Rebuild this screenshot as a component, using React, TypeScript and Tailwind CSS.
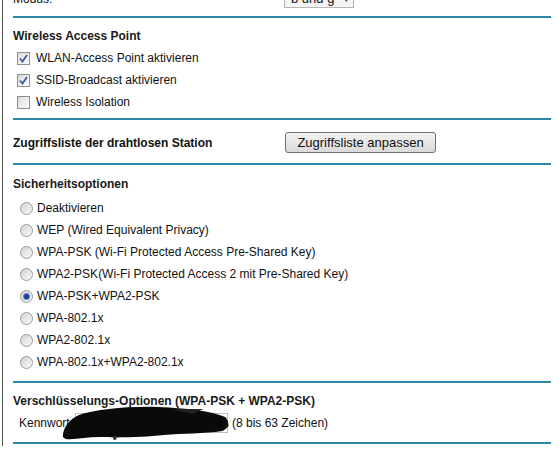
import React from 'react';

const Line = () => <div className="h-[2px] w-[538px] bg-[#2a88a6]" />;

const Check = ({ checked }: { checked?: boolean }) => (
  <span className="flex h-[13px] w-[13px] items-center justify-center border border-[#8e8f8f] bg-gradient-to-br from-[#dcdcdc] to-[#fbfbfb]">
    {checked && (
      <svg width="9" height="9" viewBox="0 0 9 9">
        <path d="M1 4.5 L3.5 7.5 L8 1" fill="none" stroke="#3d5aa0" strokeWidth="1.8" />
      </svg>
    )}
  </span>
);

const Radio = ({ checked }: { checked?: boolean }) => (
  <span className="flex h-[13px] w-[13px] items-center justify-center rounded-full border border-[#9a9a9a] bg-gradient-to-br from-[#d2d2d2] to-[#fafafa]">
    {checked && <span className="h-[5px] w-[5px] rounded-full bg-[#1d3f8a] shadow-[0_0_0_1px_#5b86d6]" />}
  </span>
);

const CheckRow = ({ label, checked }: { label: string; checked?: boolean }) => (
  <div className="flex h-[22px] items-center gap-[6px] pl-[4px]">
    <Check checked={checked} />
    <span>{label}</span>
  </div>
);

const RadioRow = ({ label, checked }: { label: string; checked?: boolean }) => (
  <div className="flex h-[22px] items-center gap-[4px] pl-[7px]">
    <Radio checked={checked} />
    <span>{label}</span>
  </div>
);

const Heading = ({ children }: { children: React.ReactNode }) => (
  <div className="h-[14px] font-bold leading-[14px] text-[#1a1a1a]">{children}</div>
);

export default function App() {
  const security = [
    'Deaktivieren',
    'WEP (Wired Equivalent Privacy)',
    'WPA-PSK (Wi-Fi Protected Access Pre-Shared Key)',
    'WPA2-PSK(Wi-Fi Protected Access 2 mit Pre-Shared Key)',
    'WPA-PSK+WPA2-PSK',
    'WPA-802.1x',
    'WPA2-802.1x',
    'WPA-802.1x+WPA2-802.1x',
  ];

  return (
    <div className="h-[455px] w-[559px] overflow-hidden bg-white pl-[2px] font-['Liberation_Sans',Arial,sans-serif] text-[12px] leading-[14px] text-[#111]">
      <div className="h-full border-l border-[#505050] pl-[10px]">
        {/* Modus row (cut off at top) */}
        <div className="-mt-[9px] flex h-[16px] items-center whitespace-nowrap">
          <span className="w-[271px]">Modus:</span>
          <span className="flex h-[18px] w-[70px] items-center justify-between border border-[#b5b5b5] bg-[#f4f4f4] pl-[6px] pr-[4px] text-[13px]">
            <span>b und g</span>
            <span className="text-[9px]">▾</span>
          </span>
        </div>
        <div className="mt-[9px]">
          <Line />
        </div>

        {/* Wireless Access Point */}
        <div className="mt-[11px]">
          <Heading>Wireless Access Point</Heading>
        </div>
        <div className="mt-[4px]">
          <CheckRow label="WLAN-Access Point aktivieren" checked />
          <CheckRow label="SSID-Broadcast aktivieren" checked />
          <CheckRow label="Wireless Isolation" />
        </div>
        <div className="mt-[5px]">
          <Line />
        </div>

        {/* Zugriffsliste */}
        <div className="mt-[12px] flex h-[21px] items-center">
          <span className="w-[272px] font-bold">Zugriffsliste der drahtlosen Station</span>
          <button className="flex h-[21px] w-[151px] items-center justify-center rounded-[3px] border border-[#707070] bg-gradient-to-b from-[#f3f3f3] to-[#dadada] text-[13px] text-[#111]">
            Zugriffsliste anpassen
          </button>
        </div>
        <div className="mt-[10px]">
          <Line />
        </div>

        {/* Sicherheitsoptionen */}
        <div className="mt-[12px]">
          <Heading>Sicherheitsoptionen</Heading>
        </div>
        <div className="mt-[6px]">
          {security.map((s) => (
            <RadioRow key={s} label={s} checked={s === 'WPA-PSK+WPA2-PSK'} />
          ))}
        </div>
        <div className="mt-[8px]">
          <Line />
        </div>

        {/* Verschlüsselung */}
        <div className="mt-[11px]">
          <Heading>Verschlüsselungs-Optionen (WPA-PSK + WPA2-PSK)</Heading>
        </div>
        <div className="relative mt-[4px] flex h-[22px] items-center pl-[6px]">
          <span className="w-[56px]">Kennwort:</span>
          <span className="h-[20px] w-[153px] border border-[#bdbdbd] bg-white" />
          <span className="ml-[4px]">(8 bis 63 Zeichen)</span>
          <svg
            className="absolute left-[47px] top-[-7px]"
            width="170"
            height="36"
            viewBox="0 0 180 36"
            preserveAspectRatio="none"
          >
            <path
              d="M3 32 C3 23 9 15 20 10 C40 4 72 1 104 2 C134 3 160 6 175 12 C180 17 179 23 172 26 C152 29 130 28 110 30 C90 32 62 33 42 32 C28 32 16 35 6 34 Z"
              fill="#0a0a0a"
            />
            <path d="M12 22 C18 14 26 11 36 10 L30 24 Z" fill="#0a0a0a" />
            <path d="M118 4 L152 4 L140 9 Z" fill="#222" />
            <circle cx="8" cy="28" r="3.5" fill="#111" />
            <circle cx="58" cy="33" r="2" fill="#333" />
            <circle cx="176" cy="20" r="2.5" fill="#111" />
          </svg>
        </div>
        <div className="mt-[8px]">
          <Line />
        </div>
      </div>
    </div>
  );
}
